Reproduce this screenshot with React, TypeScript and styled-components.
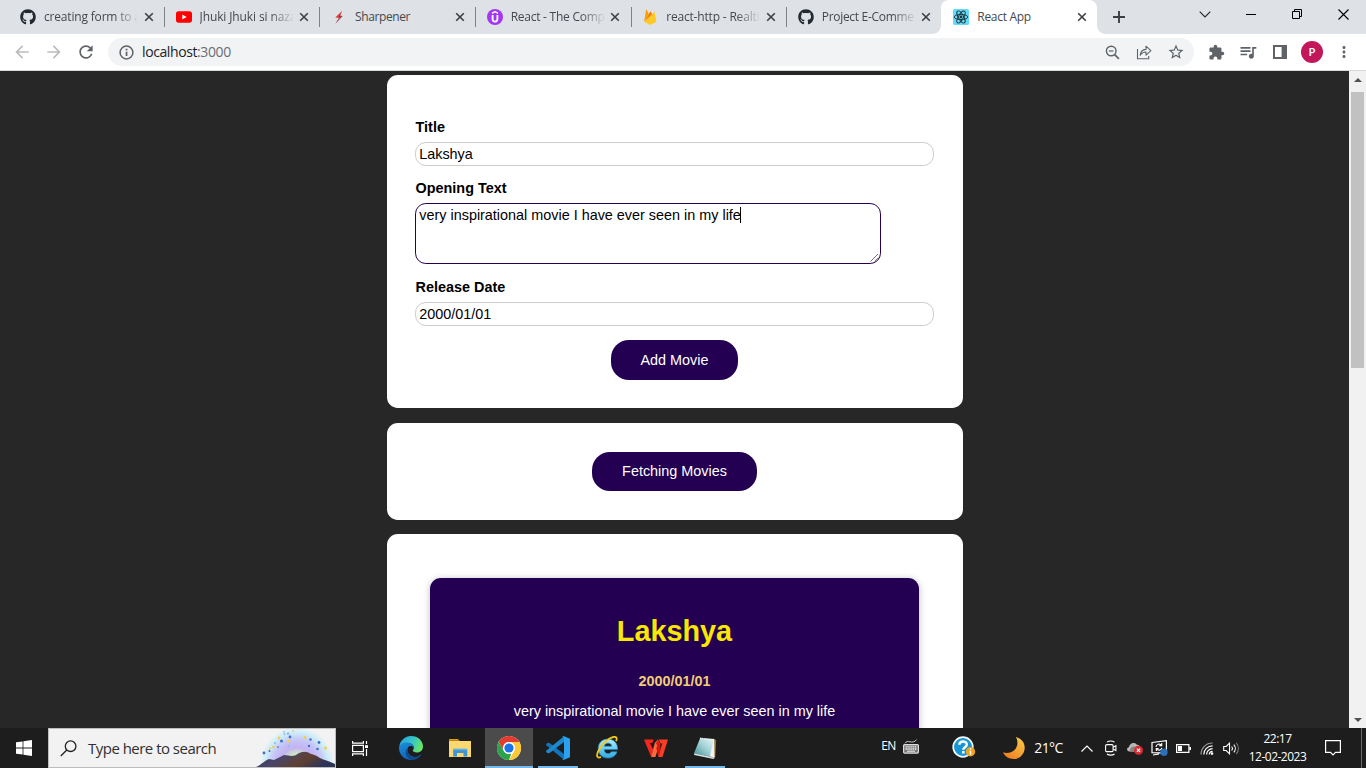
import React from 'react';
import styled, { createGlobalStyle } from 'styled-components';
import { FaGithub } from 'react-icons/fa';
import {
  MdArrowBack, MdArrowForward, MdRefresh,
  MdStarBorder, MdExtension, MdQueueMusic, MdMoreVert,
} from 'react-icons/md';

const Global = createGlobalStyle`
  * { box-sizing: border-box; }
  body { margin: 0; overflow: hidden; font-family: "Liberation Sans", Arial, sans-serif; }
  svg { display: block; flex: none; }
`;

const UI_FONT = '"Open Sans", "Noto Sans", sans-serif';

const Screen = styled.div`
  display: flex;
  flex-direction: column;
  width: 1366px;
  height: 768px;
  overflow: hidden;
`;

/* ---------- browser tabs ---------- */

const TabStrip = styled.div`
  display: flex;
  height: 34px;
  padding-left: 8px;
  background: #dee1e6;
  font-family: ${UI_FONT};
`;

const TabBox = styled.div<{ $active?: boolean; $divider?: boolean }>`
  display: flex;
  align-items: center;
  position: relative;
  width: ${p => (p.$active ? 156 : 155.55)}px;
  height: 34px;
  padding-left: 12px;
  color: #45494d;
  background: ${p => (p.$active ? '#fff' : 'transparent')};
  border-radius: 8px 8px 0 0;
  &::after {
    content: '';
    position: absolute;
    display: ${p => (p.$divider ? 'block' : 'none')};
    right: -1.4px;
    top: 7px;
    width: 1px;
    height: 20px;
    background: #808387;
  }
`;

const TabFoot = styled.span<{ $side: 'left' | 'right' }>`
  position: absolute;
  bottom: 0;
  ${p => p.$side}: -8px;
  width: 8px;
  height: 8px;
  background: radial-gradient(circle at ${p => (p.$side === 'left' ? '0 0' : '100% 0')}, transparent 7.5px, #fff 8px);
`;

const TabTitle = styled.span<{ $fade?: boolean; $spacing?: number }>`
  width: 93px;
  margin-left: 8px;
  overflow: hidden;
  white-space: nowrap;
  font-size: 12px;
  line-height: 18px;
  letter-spacing: ${p => p.$spacing ?? -0.3}px;
  ${p => p.$fade && 'mask-image: linear-gradient(90deg, #000 70px, transparent 95px);'}
`;

const TabClose = styled.span`
  display: flex;
  margin-left: 6.6px;
`;

const NewTab = styled.div`
  display: flex;
  align-items: center;
  justify-content: center;
  width: 44px;
`;

const WindowControls = styled.div`
  display: flex;
  margin-left: auto;
`;

const WindowButton = styled.div`
  display: flex;
  align-items: center;
  justify-content: center;
  width: 46px;
  height: 28px;
`;

/* ---------- toolbar ---------- */

const Toolbar = styled.div`
  display: flex;
  align-items: center;
  height: 37px;
  padding-left: 6px;
  background: #fff;
  border-bottom: 1px solid #d5dad8;
  color: #5f6368;
  font-family: ${UI_FONT};
`;

const ToolButton = styled.div<{ $dim?: boolean }>`
  display: flex;
  justify-content: center;
  width: 32px;
  color: ${p => (p.$dim ? '#babcbe' : 'inherit')};
`;

const Omnibox = styled.div`
  display: flex;
  align-items: center;
  width: 1086px;
  height: 28px;
  margin-left: 6px;
  margin-right: 6px;
  padding-left: 11px;
  padding-right: 2px;
  border-radius: 14px;
  background: #f1f3f4;
`;

const Address = styled.span`
  flex: 1;
  margin-left: 8px;
  font-size: 14px;
  line-height: 20px;
  letter-spacing: -0.4px;
  color: #6a6e73;
`;
const Host = styled.span`color: #202124;`;

const Avatar = styled.div`
  display: flex;
  align-items: center;
  justify-content: center;
  width: 22px;
  height: 22px;
  border-radius: 50%;
  background: #c2185b;
  color: #fff;
  font-size: 11.5px;
  font-weight: 600;
  line-height: 12px;
`;

/* ---------- page ---------- */

const Viewport = styled.div`
  display: flex;
  height: 657px;
  background: #272727;
`;

const Page = styled.main`
  flex: 1;
  display: flex;
  flex-direction: column;
  align-items: center;
  overflow: hidden;
  padding-top: 4px;
`;

const Card = styled.section<{ $height: number; $gap: number; $top: number }>`
  flex: none;
  display: flex;
  flex-direction: column;
  align-items: center;
  width: 576px;
  height: ${p => p.$height}px;
  margin-bottom: ${p => p.$gap}px;
  margin-right: -1px;
  padding: ${p => p.$top}px 29px 0 28px;
  border-radius: 10.8px;
  background: #fff;
`;

const Field = styled.div<{ $after: number }>`
  width: 100%;
  margin-bottom: ${p => p.$after}px;
`;

const Label = styled.label`
  display: block;
  height: 16px;
  margin-bottom: 7px;
  padding-left: 0.6px;
  font-size: 14.4px;
  line-height: 17px;
  font-weight: bold;
  color: #000;
`;

const TextInput = styled.input`
  display: block;
  width: 519px;
  height: 24px;
  padding: 0 3.2px;
  border: 1px solid #ccc;
  border-radius: 10.8px;
  outline: none;
  background: #fff;
  color: #000;
  font: 14.4px "Liberation Sans", Arial, sans-serif;
`;

const TextArea = styled.div`
  position: relative;
  display: flex;
  width: 466px;
  height: 61px;
  padding: 3px 3.3px;
  border: 1px solid #230052;
  border-radius: 10.8px;
  font-size: 14.4px;
  line-height: 17px;
  color: #000;
`;

const Caret = styled.span`
  width: 1px;
  height: 16px;
  margin-left: -0.6px;
  background: #000;
`;

const Grip = styled.svg`
  position: absolute;
  right: 0;
  bottom: 0;
`;

const Button = styled.button<{ $width: number; $height: number }>`
  width: ${p => p.$width}px;
  height: ${p => p.$height}px;
  padding: 0 0 1px;
  border: 0;
  border-radius: 18px;
  background: #230052;
  color: #fff;
  font: 14.4px "Liberation Sans", Arial, sans-serif;
`;

const Movie = styled.article`
  display: flex;
  flex-direction: column;
  align-items: center;
  width: 489px;
  height: 200px;
  padding-top: 37px;
  border-radius: 10.8px;
  background: #230052;
  box-shadow: 0 1px 7px rgba(0, 0, 0, 0.26);
  color: #fff;
`;

const MovieTitle = styled.h2`
  margin: 0 0 25px;
  font-size: 28.8px;
  line-height: 33px;
  color: #f7e702;
`;

const MovieDate = styled.h3`
  margin: 0 0 14px;
  font-size: 14.4px;
  line-height: 16px;
  color: #f0cd78;
`;

const MovieText = styled.p`
  margin: 0;
  font-size: 14.4px;
  line-height: 16px;
`;

const ScrollBar = styled.div`
  display: flex;
  flex-direction: column;
  align-items: center;
  width: 17px;
  background: #f1f1f1;
`;
const ScrollThumb = styled.div`
  width: 13px;
  height: 276px;
  margin-top: 4px;
  margin-bottom: auto;
  background: #c1c1c1;
`;
const ScrollArrow = styled.div`
  display: flex;
  align-items: center;
  justify-content: center;
  width: 17px;
  height: 17px;
`;

/* ---------- taskbar ---------- */

const Taskbar = styled.footer`
  display: flex;
  height: 40px;
  background: #1d1d1d;
  color: #fff;
  font-family: ${UI_FONT};
`;

const TaskCell = styled.div<{ $width?: number; $active?: boolean; $line?: number; $before?: number; $lift?: number }>`
  display: flex;
  align-items: center;
  justify-content: center;
  position: relative;
  flex: none;
  width: ${p => p.$width ?? 48}px;
  height: 40px;
  margin-left: ${p => p.$before ?? 0}px;
  padding-bottom: ${p => p.$lift ?? 0}px;
  background: ${p => (p.$active ? '#4b4b4b' : 'transparent')};
  &::after {
    content: '';
    position: absolute;
    bottom: 0;
    width: ${p => p.$line ?? 0}px;
    height: 2px;
    background: #76b9ed;
  }
`;

const Search = styled.div`
  display: flex;
  align-items: center;
  width: 288px;
  height: 40px;
  padding-left: 11px;
  border: 1px solid #bdbdbd;
  background: #f2f2f2;
`;

const SearchText = styled.span`
  flex: 1;
  margin-left: 11px;
  font-size: 15px;
  line-height: 20px;
  letter-spacing: -0.52px;
  color: #303030;
`;

const TrayText = styled.span<{ $size: number; $spacing: number }>`
  white-space: nowrap;
  font-size: ${p => p.$size}px;
  line-height: 18px;
  letter-spacing: ${p => p.$spacing}px;
`;

const Clock = styled.div`
  display: flex;
  flex-direction: column;
  align-items: center;
  justify-content: center;
  width: 70px;
  height: 40px;
  padding-right: 1px;
`;

const ShowDesktop = styled.div`
  width: 1px;
  height: 40px;
  margin-left: 8px;
  background: #6a6a6a;
`;

/* ---------- drawings ---------- */

const YoutubeIcon = () => (
  <svg width="16" height="16" viewBox="0 0 16 16">
    <rect x="0" y="2.3" width="16" height="11.4" rx="2.6" fill="#f00" />
    <path d="M6.3 5.6v4.8L10.6 8z" fill="#fff" />
  </svg>
);

const BoltIcon = () => (
  <svg width="16" height="16" viewBox="0 0 16 16">
    <path d="M11.2 1.8 4.3 8.4l4 .7z" fill="#e23b3b" />
    <path d="M11.6 7 7.6 6.3 8.3 9 4.6 14.4z" fill="#8d3038" />
    <path d="M4.6 14.4 11 7.6 8.4 8z" fill="#a9585f" />
  </svg>
);

const UdemyIcon = () => (
  <svg width="16" height="16" viewBox="0 0 16 16">
    <circle cx="8" cy="8" r="8" fill="#a435f0" />
    <path d="M5 4.3 8 2.6l3 1.7" fill="none" stroke="#fff" strokeWidth="1.4" />
    <path d="M5.6 6v4.1c0 3.3 4.8 3.3 4.8 0V6" fill="none" stroke="#fff" strokeWidth="1.9" />
  </svg>
);

const FirebaseIcon = () => (
  <svg width="16" height="16" viewBox="0 0 16 16">
    <path d="M2.1 12.7 4 1c.1-.4.6-.5.8-.1l2 3.8z" fill="#ffa000" />
    <path d="m2.1 12.7 6-9.8c.2-.4.7-.4.9 0l1.5 3z" fill="#f57c00" />
    <path d="m2.1 12.7 9.8-9.3c.3-.3.8-.1.9.3l1.6 9-5.6 3c-.4.2-.9.2-1.2 0z" fill="#ffca28" />
  </svg>
);

const ReactIcon = () => (
  <svg width="16" height="16" viewBox="0 0 16 16">
    <rect width="16" height="16" rx="1.5" fill="#61dafb" />
    <g fill="none" stroke="#23363d" strokeWidth="0.95">
      <ellipse cx="8" cy="8" rx="6.8" ry="2.6" />
      <ellipse cx="8" cy="8" rx="6.8" ry="2.6" transform="rotate(60 8 8)" />
      <ellipse cx="8" cy="8" rx="6.8" ry="2.6" transform="rotate(120 8 8)" />
    </g>
    <circle cx="8" cy="8" r="1.4" fill="#23363d" />
  </svg>
);

const CloseIcon = () => (
  <svg width="10" height="10" viewBox="0 0 10 10">
    <path d="m1.2 1.2 7.6 7.6M8.8 1.2 1.2 8.8" stroke="#3c4043" strokeWidth="1.6" />
  </svg>
);

const PlusIcon = () => (
  <svg width="12" height="12" viewBox="0 0 12 12">
    <path d="M6 0v12M0 6h12" stroke="#3c4043" strokeWidth="1.9" />
  </svg>
);

const InfoIcon = () => (
  <svg width="15" height="15" viewBox="0 0 15 15">
    <circle cx="7.5" cy="7.5" r="6.4" fill="none" stroke="#5f6368" strokeWidth="1.5" />
    <path d="M6.7 6.7h1.7v4.4H6.7zM6.7 3.7h1.7v1.7H6.7z" fill="#5f6368" />
  </svg>
);

const ZoomOutIcon = () => (
  <svg width="15" height="15" viewBox="0 0 15 15" fill="none" stroke="#5f6368">
    <circle cx="6.2" cy="6" r="4.8" strokeWidth="1.4" />
    <path d="m9.700 9.600 4.200 4.200" strokeWidth="1.700" />
    <path d="M3.900 6h4.600" strokeWidth="1.200" />
  </svg>
);

const ShareIcon = () => (
  <svg width="16" height="16" viewBox="0 0 16 16" fill="none" stroke="#5f6368" strokeWidth="1.1">
    <path d="M1.5 5v9.700h11.200v-2.700" />
    <path d="M4.200 11.300c.4-3.600 2.400-5.700 5.800-5.900V2.200l4.900 4.500-4.900 4.400V8c-2.600 0-4.400 1.100-5.800 3.300z" strokeLinejoin="round" />
  </svg>
);

const PanelIcon = () => (
  <svg width="14" height="14" viewBox="0 0 14 14">
    <path d="M0 0h14v14H0zM2 2v10h6.600V2z" fill="#5f6368" fillRule="evenodd" />
  </svg>
);

const StartIcon = () => (
  <svg width="16" height="16" viewBox="0 0 16 16" fill="#fff">
    <path d="M0 2.3 6.6 1.400v6.200H0zM7.400 1.300 16 0v7.600H7.400zM0 8.400h6.600v6.200L0 13.700zM7.400 8.400H16V16l-8.600-1.300z" />
  </svg>
);

const SearchIcon = () => (
  <svg width="17" height="17" viewBox="0 0 17 17" fill="none" stroke="#222" strokeWidth="1.3">
    <circle cx="10.600" cy="6.200" r="5.300" />
    <path d="M6.800 10 .8 16" />
  </svg>
);

const DOTS: [number, number, number, string][] = [
  [8, 24, 1.4, '#3d6fc4'], [14, 19.5, 1, '#f2cf4a'], [17.5, 18, 1.3, '#f2cf4a'], [19, 14, 1, '#8fb8ea'],
  [23, 9, 1.4, '#f2cf4a'], [25.5, 12, 1.5, '#3d6fc4'], [32, 4.5, 1.2, '#8fb8ea'], [37, 2, 1.2, '#e3d9a0'],
  [34, 8, 1.4, '#3d6fc4'], [33, 12, 1.5, '#f2cf4a'], [32.5, 17, 1, '#8fb8ea'], [49, 8.5, 1.4, '#f2cf4a'],
  [54.5, 10.5, 1.2, '#3d6fc4'], [53, 17, 1.2, '#3d6fc4'], [63, 13.5, 1.4, '#3d6fc4'],
  [61.5, 20, 1.3, '#3d6fc4'], [69.5, 19, 1.5, '#f2cf4a'], [13.5, 22, 1, '#3d6fc4'], [22, 18, 1, '#5d8dda'],
  [28, 2.8, 1, '#a3c8ee'], [28.500, 5, 1.2, '#a3c8ee'],
];

const SearchArt = () => (
  <svg width="79" height="38" viewBox="0 0 79 38">
    <defs>
      <radialGradient id="glow">
        <stop offset="0" stopColor="#d2f0b4" />
        <stop offset="0.28" stopColor="#cfe3c4" />
        <stop offset="0.45" stopColor="#c3b3f3" />
        <stop offset="0.65" stopColor="#c6c4f7" />
        <stop offset="0.86" stopColor="#cdeef7" />
        <stop offset="1" stopColor="#f2f2f2" />
      </radialGradient>
      <linearGradient id="hill" x1="0" x2="1" y1="0" y2="0.3">
        <stop offset="0" stopColor="#2f3757" />
        <stop offset="0.4" stopColor="#4a4668" />
        <stop offset="0.72" stopColor="#60402f" />
        <stop offset="1" stopColor="#2e3458" />
      </linearGradient>
    </defs>
    <rect width="79" height="38" fill="#f2f2f2" />
    <circle cx="41" cy="35" r="37" fill="url(#glow)" />
    {DOTS.map(([x, y, r, c], i) => <circle key={i} cx={x} cy={y} r={r} fill={c} />)}
    <path d="M0 38c5-2 8-6 13-8l5 1 10-5c5 0 7 2 12 0 6-4 10-4 15-1 6 1 9 5 14 6 4 1 7 3 10 4v3z" fill="url(#hill)" />
  </svg>
);

const TaskViewIcon = () => (
  <svg width="17" height="15" viewBox="0 0 17 15" fill="none" stroke="#fff" strokeWidth="1.2">
    <path d="M.6 0v2.2h10.800V0M.6 15v-2.200h10.800V15M.6 4.400h10.800v6.200H.6zM14.500 0v3M14.500 8v7" />
    <path d="M13 4.200h3v2.800h-3z" fill="#fff" stroke="none" />
  </svg>
);

const EdgeIcon = () => (
  <svg width="24" height="24" viewBox="0 0 24 24">
    <defs>
      <linearGradient id="edgeTop" x1="0" x2="1" y1="0.3" y2="0.6">
        <stop offset="0" stopColor="#2aa6dc" />
        <stop offset="0.5" stopColor="#35c4c9" />
        <stop offset="1" stopColor="#6de85c" />
      </linearGradient>
      <linearGradient id="edgeLow" x1="0" x2="0.6" y1="0" y2="1">
        <stop offset="0" stopColor="#1b8fdc" />
        <stop offset="1" stopColor="#0f5db4" />
      </linearGradient>
    </defs>
    <path d="M.3 10.500C1.200 4.200 6.200 0 12 0c7 0 12 4.800 12 10.400 0 3.700-2.700 6-6 6-2.700 0-4.200-.9-4.200-1.800 0-.7 1-1.200 1-3C14.800 8.900 12.200 7 9 7 5 7 1.700 8.900.3 10.500z" fill="url(#edgeTop)" />
    <path d="M0 12C.4 8.400 3.700 6.500 7.500 6.500c4 0 7.300 2 7.300 5-1-1.700-4.900-2.300-6 .5-1.800 4.400 3 10.200 9.200 8.800 1.500-.3 3.300-1.500 4.300-2.200C20.400 21.800 16.600 24 12 24 5.200 24 0 18.600 0 12z" fill="url(#edgeLow)" />
    <path d="M9 11.500c-2 4.800 2.600 10.600 9 9.300 1.500-.3 3.300-1.500 4.300-2.200-2 3.400-5.600 5.300-9.500 5.400C7 23 4.500 15.500 9 11.500z" fill="#114a8b" />
  </svg>
);

const FolderIcon = () => (
  <svg width="22" height="20" viewBox="0 0 22 20">
    <path d="M0 1h9l1.500 2H22v3H0z" fill="#e09b13" />
    <path d="M0 3h22v16H0z" fill="#fbd970" />
    <path d="M0 3h9.500l1.500-.8H0z" fill="#b9770c" />
    <path d="M4.200 18.500v-7.200h14v7.200h-3.700v-3.400H8v3.400z" fill="#3f93d3" />
    <path d="M4.200 10.600h14v1.600h-14z" fill="#62b2e8" />
  </svg>
);

const ChromeIcon = () => (
  <svg width="24" height="24" viewBox="0 0 24 24">
    <circle cx="12" cy="12" r="12" fill="#fff" />
    <path d="M1.600 6A12 12 0 0 1 22.400 6H12a6 6 0 0 0-5.200 9z" fill="#e33b2e" />
    <path d="M1.600 6 6.800 15a6 6 0 0 0 5.200 3c.8 0 1.600-.2 2.300-.5L12 24A12 12 0 0 1 1.600 6z" fill="#2ba24c" />
    <path d="M22.400 6A12 12 0 0 1 12 24l5.200-9A6 6 0 0 0 12 6z" fill="#fcc934" />
    <circle cx="12" cy="12" r="5.900" fill="#fff" />
    <circle cx="12" cy="12" r="4.600" fill="#1a73e8" />
  </svg>
);

const CodeIcon = () => (
  <svg width="24" height="24" viewBox="0 0 24 24">
    <path d="M0 8.200 1.600 6.800l2 .2L18 18v5.800L.2 9.300z" fill="#1273ba" />
    <path d="M0 15.800 1.600 17.200l2-.2L18 6V.2L.2 14.700z" fill="#1f88cc" />
    <path d="M17.500 0 24 2.700v18.600L17.500 24l-1-.8 1.500-1V1.800l-1.500-1z" fill="#2ba1ee" />
  </svg>
);

const IeIcon = () => (
  <svg width="24" height="24" viewBox="0 0 24 24">
    <defs>
      <linearGradient id="ie" x1="0" x2="0" y1="0" y2="1">
        <stop offset="0" stopColor="#b4ecfc" />
        <stop offset="0.5" stopColor="#6bcdf3" />
        <stop offset="1" stopColor="#35a6de" />
      </linearGradient>
    </defs>
    <path
      d="M22.600 13.600H9.200c.1 2.500 1.500 4 3.800 4 1.600 0 2.700-.7 3.300-1.800h5.700c-1.200 4-4.700 6.300-9.200 6.300-5.700 0-9.600-4-9.600-9.500s3.900-9.500 9.600-9.500c6.200 0 10 4.200 9.800 10.500zM9.300 10.200h7.400c-.2-1.900-1.600-3-3.600-3-2.100 0-3.500 1.100-3.800 3z"
      fill="url(#ie)" stroke="#2386bd" strokeWidth=".7" fillRule="evenodd"
    />
    <path d="M21 5.200C22.500 2 21.500.5 18.600 1 13.500 2 5.600 9.200 3 15.600c-1.900 4.600-.9 7 3 5.600" fill="none" stroke="#f4c51b" strokeWidth="1.800" />
  </svg>
);

const WpsIcon = () => (
  <svg width="24" height="19" viewBox="0 0 24 19">
    <path d="M0 .5h9.800l-1.400 3.400H6l3.300 7L7.200 18z" fill="#f5271c" />
    <path d="M13.800.5 15.600 4 11.400 18H7.200l3.600-14z" fill="#ff6a3c" />
    <path d="M11.900 4.300 13.800.5l2.800 5.500-1.500 4.500z" fill="#e0200f" />
    <path d="M14.800.5H24L18.500 18h-4.300l4-13.600h-1.700z" fill="#fb3c26" />
    <path d="m12.300 9 2-4.500L16.700 9l-2.500 9z" fill="#d81710" />
  </svg>
);

const NotepadIcon = () => (
  <svg width="24" height="24" viewBox="0 0 24 24">
    <defs>
      <linearGradient id="note" x1="0" x2="1" y1="1" y2="0">
        <stop offset="0" stopColor="#3e8f96" />
        <stop offset="0.55" stopColor="#a7d4d9" />
        <stop offset="1" stopColor="#e9f7f8" />
      </linearGradient>
    </defs>
    <path d="m20.500 3 2.600 1-.8 17-3 1z" fill="#9b7538" />
    <path d="M16 3.500 21.200 2.800l.3 19.200L16 20z" fill="#eff3f3" />
    <path d="m7.200 2 13.600 1.200-4 17.300L1 17.300z" fill="url(#note)" />
    <path d="m1 17.300 15.800 3.200 4.700 1.500-.9.900L1.200 19z" fill="#d7e0e0" />
    <path d="m7 2.300 13.800 1.300" stroke="#f5f5f5" strokeWidth="1.4" strokeDasharray="1.3 .8" />
  </svg>
);

const KeyboardIcon = () => (
  <svg width="16" height="15" viewBox="0 0 16 15">
    <rect x=".6" y="5.600" width="14.800" height="8.500" rx="1" fill="#777" stroke="#ddd" strokeWidth="1.2" />
    <path d="M2.500 7.800h11M2.500 10h11" stroke="#f2f2f2" strokeWidth="1.300" strokeDasharray="1.3 .6" />
    <path d="M4 12.200h8" stroke="#f0f0f0" />
    <path d="M2 4.300c1-2 3-2 5-1.500s5 .4 6.500-2.200" fill="none" stroke="#ccc" />
  </svg>
);

const HelpIcon = () => (
  <svg width="24" height="24" viewBox="0 0 24 24">
    <circle cx="11" cy="11" r="9.800" fill="#1795d4" stroke="#f2f8fb" strokeWidth="1.7" />
    <path d="M7.400 8.700c0-4.400 7.400-4.300 7.400-.2 0 2.700-3.500 2.700-3.500 5.300M11.300 15v2.400" fill="none" stroke="#fff" strokeWidth="2.500" />
    <circle cx="18.500" cy="15.700" r="4.700" fill="#f0a31d" />
    <path d="M18.500 12.300v1.400M18.500 14.700v4" stroke="#fff" strokeWidth="1.5" />
  </svg>
);

const MoonIcon = () => (
  <svg width="24" height="24" viewBox="0 0 24 24">
    <defs>
      <linearGradient id="moon" x1="1" x2="0.3" y1="0" y2="1">
        <stop offset="0" stopColor="#fbd04b" />
        <stop offset="1" stopColor="#f08022" />
      </linearGradient>
    </defs>
    <path d="M14 1c5.400 1.500 8.900 5.700 8.700 11C22.400 18.400 17.600 23 11.800 23 6.800 23 2.800 20.500 1 16.300c3.500 1.200 8.700.6 11.500-2.300C16 10.500 16.200 5.300 14 1z" fill="url(#moon)" />
  </svg>
);

const ChevronUp = () => (
  <svg width="12" height="7" viewBox="0 0 12 7"><path d="m.5 6.500 5.500-5.500 5.500 5.500" fill="none" stroke="#fff" strokeWidth="1.2" /></svg>
);

const MeetIcon = () => (
  <svg width="12" height="16" viewBox="0 0 12 16" fill="none" stroke="#fff" strokeWidth="1.1">
    <rect x=".6" y="4.600" width="7.500" height="7" rx="1.2" />
    <path d="m8.200 7.200 2.700-1.600v5L8.200 9M2 2.200c2-1.700 5.500-1.700 7.500 0M2 14c2 1.500 5.500 1.500 7.500 0" />
  </svg>
);

const CloudIcon = () => (
  <svg width="18" height="14" viewBox="0 0 18 14">
    <path d="M3.500 10.500C.5 10.500.3 6.800 3 6.300 3.400 2.500 8 .5 10.500 3.500c3 .2 3.500 2 3.500 4v3z" fill="#b9b9b9" />
    <path d="M4 10.500C3 7 7 4.500 9.500 6l4.500-.5v5z" fill="#858585" />
    <circle cx="12.500" cy="9.300" r="4.500" fill="#d92b31" />
    <path d="m10.900 7.700 3.200 3.200M14.100 7.700l-3.200 3.200" stroke="#fff" strokeWidth="1.2" />
  </svg>
);

const SyncIcon = () => (
  <svg width="17" height="16" viewBox="0 0 17 16">
    <path d="M1 2.500 15.400.7v12.500L1 12.700zM2 15l6-1" fill="none" stroke="#fff" strokeWidth="1.2" />
    <path d="M5 7c.2-3 4-3.800 5.500-1.600M10.700 3v2.600H8.300M10.800 7.800c-.4 2.500-3.800 3.300-5.300 1M5.300 11V8.500h2.300" fill="none" stroke="#fff" strokeWidth="1.1" />
    <circle cx="13" cy="12.200" r="3.700" fill="#2c6fbd" />
  </svg>
);

const BatteryIcon = () => (
  <svg width="15" height="9" viewBox="0 0 15 9">
    <path d="M.6.6h12.300v7.800H.6z" fill="none" stroke="#fff" strokeWidth="1.2" />
    <path d="M2 2h4v5H2zM13.300 3H15v3h-1.700z" fill="#fff" />
  </svg>
);

const WifiIcon = () => (
  <svg width="14" height="13" viewBox="0 0 14 13" fill="none" strokeWidth="1.2">
    <path d="M1 12.500C1 6 6 1 12.600 1" stroke="#999" />
    <path d="M3.800 12.500c0-4.800 3.800-8.600 8.800-8.600M6.600 12.500c0-3.300 2.600-5.900 6-5.900M9.300 12.500c0-1.800 1.500-3.200 3.300-3.200" stroke="#fff" />
    <circle cx="12" cy="11.600" r="1.3" fill="#fff" />
  </svg>
);

const VolumeIcon = () => (
  <svg width="17" height="13" viewBox="0 0 17 13" fill="none" stroke="#fff" strokeWidth="1.1">
    <path d="M.7 4.500h2.500L6.500 1.200v10.600L3.200 8.500H.7zM8.600 4.500c1 1.200 1 2.800 0 4M10.800 2.700c2 2.200 2 5.400 0 7.600" />
    <path d="M13.200.8c3 3.200 3 8.200 0 11.400" stroke="#777" />
  </svg>
);

const MessageIcon = () => (
  <svg width="16" height="16" viewBox="0 0 16 16">
    <path d="M.6.7h14.800v11.600h-4.900L8 14.800l-2.500-2.500H.6z" fill="none" stroke="#fff" strokeWidth="1.2" />
  </svg>
);

/* ---------- composition ---------- */

const TABS = [
  { title: 'creating form to a', icon: <FaGithub size={16} color="#24292f" />, fade: true, spacing: -0.18 },
  { title: 'Jhuki Jhuki si naza', icon: <YoutubeIcon />, fade: true, spacing: -0.12 },
  { title: 'Sharpener', icon: <BoltIcon />, fade: false, spacing: -0.4 },
  { title: 'React - The Comp', icon: <UdemyIcon />, fade: true, spacing: -0.25 },
  { title: 'react-http - Realti', icon: <FirebaseIcon />, fade: true, spacing: -0.18 },
  { title: 'Project E-Comme', icon: <FaGithub size={16} color="#24292f" />, fade: true, spacing: -0.3 },
];

export default function App() {
  return (
    <Screen>
      <Global />
      <TabStrip>
        {TABS.map((t, i) => (
          <TabBox key={t.title} $divider={i < TABS.length - 1}>
            {t.icon}
            <TabTitle $fade={t.fade} $spacing={t.spacing}>{t.title}</TabTitle>
            <TabClose><CloseIcon /></TabClose>
          </TabBox>
        ))}
        <TabBox $active>
          <TabFoot $side="left" />
          <ReactIcon />
          <TabTitle>React App</TabTitle>
          <TabClose><CloseIcon /></TabClose>
          <TabFoot $side="right" />
        </TabBox>
        <NewTab><PlusIcon /></NewTab>
        <WindowControls>
          <WindowButton><svg width="12" height="7" viewBox="0 0 12 7"><path d="m.7.7 5.300 5.300L11.300.7" fill="none" stroke="#222" strokeWidth="1.1" /></svg></WindowButton>
          <WindowButton><svg width="10" height="1"><rect width="10" height="1" /></svg></WindowButton>
          <WindowButton><svg width="10" height="10" viewBox="0 0 10 10" fill="none" stroke="#000"><path d="M.5 2.500h7v7h-7zM2.500 2.500v-2h7v7h-2" /></svg></WindowButton>
          <WindowButton><svg width="11" height="11" viewBox="0 0 11 11"><path d="m.5.500 10 10M10.500.500l-10 10" stroke="#000" strokeWidth="1.1" /></svg></WindowButton>
        </WindowControls>
      </TabStrip>

      <Toolbar>
        <ToolButton $dim><MdArrowBack size={20} /></ToolButton>
        <ToolButton $dim><MdArrowForward size={20} /></ToolButton>
        <ToolButton><MdRefresh size={20} /></ToolButton>
        <Omnibox>
          <InfoIcon />
          <Address><Host>localhost</Host>:3000</Address>
          <ToolButton><ZoomOutIcon /></ToolButton>
          <ToolButton><ShareIcon /></ToolButton>
          <ToolButton><MdStarBorder size={18} /></ToolButton>
        </Omnibox>
        <ToolButton><MdExtension size={17} /></ToolButton>
        <ToolButton><MdQueueMusic size={20} /></ToolButton>
        <ToolButton><PanelIcon /></ToolButton>
        <ToolButton><Avatar>P</Avatar></ToolButton>
        <ToolButton><MdMoreVert size={18} /></ToolButton>
      </Toolbar>

      <Viewport>
        <Page>
          <Card $height={333} $gap={15} $top={44}>
            <Field $after={14}>
              <Label>Title</Label>
              <TextInput defaultValue="Lakshya" />
            </Field>
            <Field $after={15}>
              <Label>Opening Text</Label>
              <TextArea>
                very inspirational movie I have ever seen in my life
                <Caret />
                <Grip width="10" height="10" viewBox="0 0 10 10">
                  <path d="M.5 8.500 8 1M4.500 8.500 8.500 4.500" stroke="#555" strokeWidth=".8" />
                </Grip>
              </TextArea>
            </Field>
            <Field $after={14}>
              <Label>Release Date</Label>
              <TextInput defaultValue="2000/01/01" />
            </Field>
            <Button $width={127} $height={40}>Add Movie</Button>
          </Card>
          <Card $height={97} $gap={14} $top={29}>
            <Button $width={165} $height={39}>Fetching Movies</Button>
          </Card>
          <Card $height={300} $gap={0} $top={44}>
            <Movie>
              <MovieTitle>Lakshya</MovieTitle>
              <MovieDate>2000/01/01</MovieDate>
              <MovieText>very inspirational movie I have ever seen in my life</MovieText>
            </Movie>
          </Card>
        </Page>
        <ScrollBar>
          <ScrollArrow><svg width="8" height="4"><path d="M0 4 4 0l4 4z" fill="#505050" /></svg></ScrollArrow>
          <ScrollThumb />
          <ScrollArrow><svg width="8" height="4"><path d="M0 0l4 4 4-4z" fill="#505050" /></svg></ScrollArrow>
        </ScrollBar>
      </Viewport>

      <Taskbar>
        <TaskCell><StartIcon /></TaskCell>
        <Search>
          <SearchIcon />
          <SearchText>Type here to search</SearchText>
          <SearchArt />
        </Search>
        <TaskCell><TaskViewIcon /></TaskCell>
        <TaskCell $before={3}><EdgeIcon /></TaskCell>
        <TaskCell $before={1}><FolderIcon /></TaskCell>
        <TaskCell $before={1} $active $line={48}><ChromeIcon /></TaskCell>
        <TaskCell $before={1} $line={40}><CodeIcon /></TaskCell>
        <TaskCell $before={1}><IeIcon /></TaskCell>
        <TaskCell $before={1}><WpsIcon /></TaskCell>
        <TaskCell $before={1} $line={40}><NotepadIcon /></TaskCell>
        <TaskCell $before={146} $width={27} $lift={4}><TrayText $size={12} $spacing={-0.5}>EN</TrayText></TaskCell>
        <TaskCell $width={18} $lift={3}><KeyboardIcon /></TaskCell>
        <TaskCell $before={32} $width={24}><HelpIcon /></TaskCell>
        <TaskCell $before={26} $width={24}><MoonIcon /></TaskCell>
        <TaskCell $before={6} $width={33}><TrayText $size={14} $spacing={-0.6}>21°C</TrayText></TaskCell>
        <TaskCell $before={10} $width={24}><ChevronUp /></TaskCell>
        <TaskCell $width={24}><MeetIcon /></TaskCell>
        <TaskCell $width={24}><CloudIcon /></TaskCell>
        <TaskCell $width={24}><SyncIcon /></TaskCell>
        <TaskCell $width={24}><BatteryIcon /></TaskCell>
        <TaskCell $width={24}><WifiIcon /></TaskCell>
        <TaskCell $width={24}><VolumeIcon /></TaskCell>
        <Clock>
          <TrayText $size={12} $spacing={-0.5}>22:17</TrayText>
          <TrayText $size={12} $spacing={-0.5}>12-02-2023</TrayText>
        </Clock>
        <TaskCell $width={40}><MessageIcon /></TaskCell>
        <ShowDesktop />
      </Taskbar>
    </Screen>
  );
}
